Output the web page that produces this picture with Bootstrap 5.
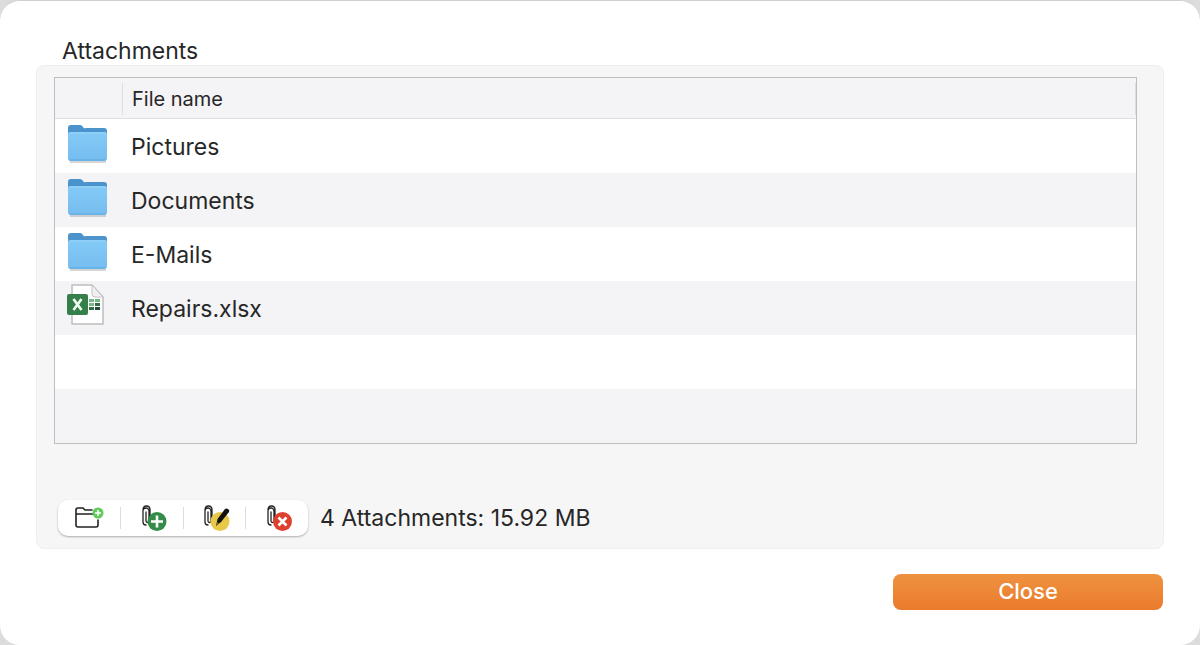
<!DOCTYPE html>
<html lang="en">
<head>
<meta charset="utf-8">
<meta name="viewport" content="width=device-width, initial-scale=1">
<title>Attachments</title>
<link href="https://cdn.jsdelivr.net/npm/bootstrap@5.3.0/dist/css/bootstrap.min.css" rel="stylesheet">
<style>
body{background:#dcdcdc;font-family:Inter,"Liberation Sans",sans-serif;font-size:23px;line-height:24px;color:#272727}
.dialog-window{min-height:100vh;background:#fff;border-radius:20px;border-top:1px solid #d0d0d0;padding:36px 36px 34px}
.group-title{font-size:23px;line-height:28px;padding-left:26px}
.group-panel{background:#f6f6f6;border:1px solid #eee;border-radius:8px;padding:11px 26px 12px 17px}
.file-box{border:1px solid #bfbfc1;background:#fff}
.file-table{table-layout:fixed;border-collapse:separate;border-spacing:0}
.file-table th{height:41px;padding:2px 0 0;background:#f4f4f6;border-bottom:1px solid #dfdfe1;font-size:20px;font-weight:400;text-align:left}
.file-table th span{display:block;height:32px;line-height:32px;padding-left:9px;border-left:1px solid #dedee0;border-right:1px solid #dedee0}
.file-table td{height:54px;padding:2px 0 0 9px;vertical-align:middle}
.file-table tbody tr:nth-child(even){background:#f4f4f6}
.icon-col{width:67px}
.file-table td.icon-cell{padding:0 0 4px 12px}
.file-table svg{display:block;width:42px;height:44px}
.status-bar{margin-top:56px}
.tool-group{width:250px;height:36px;background:#fff;border-radius:10px;box-shadow:0 1px 2px #0000004d}
.tool-button{border:0;background:none;padding:0;height:36px;flex:1}
.tool-button svg{display:block;margin:auto;width:32px;height:28px}
.tool-divider{width:1px;height:22px;background:#dedede}
.close-button{width:270px;height:36px;border:0;border-radius:8px;color:#fff;background:linear-gradient(#ee923f,#ea7b2d);margin:25px 1px 0 0;font-size:22px;font-weight:500;line-height:34px;padding:0 0 2px}
</style>
</head>
<body>
<svg width="0" height="0" class="position-absolute" aria-hidden="true">
<defs>
<linearGradient id="front" x2="0" y2="1"><stop stop-color="#83caf6"/><stop offset="1" stop-color="#75bdf0"/></linearGradient>
<symbol id="folder" viewBox="0 0 42 44">
<path d="M3 40h36" stroke="#777" stroke-opacity=".3" stroke-width="2"/>
<path d="M1 6q0-3 3-3h9q2 0 3 2t3 1h18q3 0 3 3v15H1z" fill="#4a93cd"/>
<path d="M1 12q0-2 3-2h33q3 0 3 2v24q0 3-3 3H4q-3 0-3-3z" fill="url(#front)"/>
<path d="M2 11h37" stroke="#9bd6fa"/><path d="M2 38h37" stroke="#5caadb"/>
</symbol>
<symbol id="clip" viewBox="0 0 32 28">
<path d="M13 11V7a3 3 0 0 0-6 0v11q0 3 3 3M13 8v9a1.500 1.500 0 0 1-3 0V8M7 6q0-4 3.500-4T14 6v11" fill="none" stroke="#222" stroke-width="1.300" stroke-linecap="round"/>
</symbol>
</defs>
</svg>
<main class="dialog-window d-flex flex-column">
<h1 class="group-title fw-normal mb-0">Attachments</h1>
<section class="group-panel" aria-label="Attachments">
<div class="file-box">
<table class="file-table w-100">
<colgroup><col class="icon-col"><col></colgroup>
<thead><tr><th aria-label="Icon"></th><th scope="col"><span>File name</span></th></tr></thead>
<tbody>
<tr><td class="icon-cell"><svg aria-hidden="true"><use href="#folder"/></svg></td><td>Pictures</td></tr>
<tr><td class="icon-cell"><svg aria-hidden="true"><use href="#folder"/></svg></td><td>Documents</td></tr>
<tr><td class="icon-cell"><svg aria-hidden="true"><use href="#folder"/></svg></td><td>E-Mails</td></tr>
<tr><td class="icon-cell"><svg viewBox="0 2 42 44" aria-hidden="true">
<path d="M5 3h20l11 12v27H5z" fill="#fff" stroke="#bdbdbf" stroke-width="1.500" stroke-linejoin="round"/>
<path d="M25 3v9q0 3 3 3h8z" fill="#f1f1f1" stroke="#c4c4c4"/>
<path d="M22 17h5v3h-5zM22 21h5v3h-5z" fill="#77b789"/><path d="M28 17h5v3h-5z" fill="#6fb686"/><path d="M28 21h5v3h-5zM22 25h5v3h-5z" fill="#346b49"/><path d="M28 25h5v3h-5z" fill="#244b35"/>
<rect y="12" width="21" height="21" rx="2" fill="#35804a"/>
<path d="M6.500 17l8 11M14.500 17l-8 11" stroke="#f1fff3" stroke-width="2.600"/></svg></td><td>Repairs.xlsx</td></tr>
<tr><td></td><td></td></tr>
<tr><td></td><td></td></tr>
</tbody>
</table>
</div>
<div class="status-bar d-flex align-items-center">
<div class="tool-group d-flex align-items-center ms-1" role="group" aria-label="Attachment actions">
<button type="button" class="tool-button" aria-label="New folder"><svg viewBox="0 0 32 28" aria-hidden="true"><path d="M19 6H12L10 4H5Q3 4 3 6v15q0 2 2 2h18q2 0 2-2v-5M3 10h17" fill="none" stroke="#222" stroke-width="1.600" stroke-linecap="round"/><circle cx="25" cy="9" r="5.500" fill="#62ca5b"/><path d="M22 9h6M25 6v6" stroke="#fff" stroke-width="1.500"/></svg></button>
<span class="tool-divider"></span>
<button type="button" class="tool-button" aria-label="Add attachment"><svg viewBox="0 0 32 28" aria-hidden="true"><use href="#clip"/><circle cx="21" cy="17.500" r="9.500" fill="#358b48"/><path d="M15 17.500h12M21 11.500v12" stroke="#fff" stroke-width="2.600"/></svg></button>
<span class="tool-divider"></span>
<button type="button" class="tool-button" aria-label="Edit attachment"><svg viewBox="0 0 32 28" aria-hidden="true"><use href="#clip"/><circle cx="22" cy="17.500" r="9.500" fill="#e8c847"/><path d="M18 22l1.500-7L27 5q1-1 3 0t1 3l-8 10z" fill="#111"/><path d="M18 22l1-4 2 1.500z" fill="#8b7426"/></svg></button>
<span class="tool-divider"></span>
<button type="button" class="tool-button" aria-label="Remove attachment"><svg viewBox="0 0 32 28" aria-hidden="true"><use href="#clip"/><circle cx="21.500" cy="17.500" r="9.500" fill="#df402e"/><path d="M17.500 13.500l8 8M25.500 13.500l-8 8" stroke="#fff" stroke-width="2.600"/></svg></button>
</div>
<output class="ms-2 ps-1">4 Attachments: 15.92 MB</output>
</div>
</section>
<button type="button" class="close-button btn align-self-end">Close</button>
</main>
<script src="https://cdn.jsdelivr.net/npm/bootstrap@5.3.0/dist/js/bootstrap.bundle.min.js"></script>
</body>
</html>
